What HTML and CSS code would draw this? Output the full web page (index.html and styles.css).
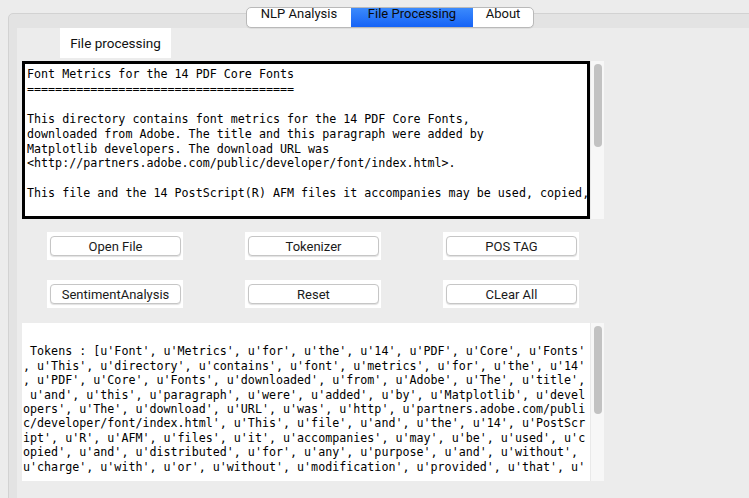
FILE: index.html
```html
<!DOCTYPE html>
<html>
<head>
<meta charset="utf-8">
<link rel="stylesheet" href="styles.css">
</head>
<body>
<div class="window">
  <div class="tabstrip">
    <div class="segments">
      <div class="seg seg-nlp">NLP Analysis</div>
      <div class="seg seg-active">File Processing</div>
      <div class="seg seg-about">About</div>
    </div>
  </div>
  <div class="pane">
    <div class="inner">
      <div class="label">File processing</div>
      <div class="text-row">
        <div class="text-box"><pre class="mono mono-top">Font Metrics for the 14 PDF Core Fonts
======================================

This directory contains font metrics for the 14 PDF Core Fonts,
downloaded from Adobe. The title and this paragraph were added by
Matplotlib developers. The download URL was
&lt;http://partners.adobe.com/public/developer/font/index.html&gt;.

This file and the 14 PostScript(R) AFM files it accompanies may be used, copied,</pre></div>
        <div class="scrollbar"><div class="thumb thumb-top"></div></div>
      </div>
      <div class="buttons">
        <div class="cell"><div class="btn">Open File</div></div>
        <div class="cell"><div class="btn">Tokenizer</div></div>
        <div class="cell"><div class="btn">POS TAG</div></div>
        <div class="cell"><div class="btn">SentimentAnalysis</div></div>
        <div class="cell"><div class="btn">Reset</div></div>
        <div class="cell"><div class="btn">CLear All</div></div>
      </div>
      <div class="out-row">
        <div class="out-box"><pre class="mono mono-out">

 Tokens : [u'Font', u'Metrics', u'for', u'the', u'14', u'PDF', u'Core', u'Fonts'
, u'This', u'directory', u'contains', u'font', u'metrics', u'for', u'the', u'14'
, u'PDF', u'Core', u'Fonts', u'downloaded', u'from', u'Adobe', u'The', u'title',
 u'and', u'this', u'paragraph', u'were', u'added', u'by', u'Matplotlib', u'devel
opers', u'The', u'download', u'URL', u'was', u'http', u'partners.adobe.com/publi
c/developer/font/index.html', u'This', u'file', u'and', u'the', u'14', u'PostScr
ipt', u'R', u'AFM', u'files', u'it', u'accompanies', u'may', u'be', u'used', u'c
opied', u'and', u'distributed', u'for', u'any', u'purpose', u'and', u'without', 
u'charge', u'with', u'or', u'without', u'modification', u'provided', u'that', u'</pre></div>
        <div class="scrollbar"><div class="thumb thumb-out"></div></div>
      </div>
    </div>
  </div>
</div>
</body>
</html>
```
FILE: styles.css
```css
html, body {
  margin: 0;
  padding: 0;
  background: #ececec;
  overflow: hidden;
  width: 749px;
  height: 498px;
}
.window {
  width: 749px;
  height: 498px;
  overflow: hidden;
  font-family: Roboto, "Liberation Sans", sans-serif;
  font-size: 13px;
  color: #111;
}
.tabstrip {
  width: 764px;
  margin-left: 8px;
  padding-top: 7px;
  height: 21px;
  display: flex;
  justify-content: center;
  position: relative;
  z-index: 2;
  margin-bottom: -15px;
}
.segments {
  display: flex;
  height: 19px;
  border: 1px solid #b9b9b9;
  border-radius: 5px;
  background: #fff;
  overflow: hidden;
  box-shadow: 0 1px 0 rgba(0,0,0,0.06);
}
.seg {
  text-align: center;
  line-height: 12px;
  padding-top: 0;
  color: #111;
}
.seg-nlp { width: 104px; }
.seg-active {
  width: 122px;
  background: linear-gradient(#3b8afc, #1663f6);
  color: #0a0a0a;
}
.seg-about { width: 60px; }
.pane {
  min-height: 500px;
  margin-left: 8px;
  border: 1px solid #d2d2d2;
  border-radius: 5px;
  background: #e3e3e3;
  padding: 14px 0 0 8px;
  box-sizing: border-box;
  width: 764px;
}
.inner {
  background: #ececec;
  min-height: 480px;
}
.label {
  margin-left: 43px;
  width: 111px;
  height: 30px;
  background: #fff;
  display: flex;
  align-items: center;
  justify-content: center;
  color: #111;
  font-size: 13.5px;
}
.text-row {
  display: flex;
  margin: 3px 0 0 5px;
  height: 158px;
}
.text-box {
  width: 568px;
  box-sizing: border-box;
  border: 3px solid #000;
  background: #fff;
  padding: 3px 2px 0;
  overflow: hidden;
}
.mono {
  margin: 0;
  font-family: "DejaVu Sans Mono", "Liberation Mono", monospace;
  font-size: 11.68px;
  color: #000;
  white-space: pre;
}
.mono-top { line-height: 14.9px; }
.mono-out { line-height: 14.4px; }
.scrollbar {
  width: 14px;
  box-sizing: border-box;
  background: #f7f7f7;
  border-left: 1px solid #e9e9e9;
  padding: 3px 0 0 3px;
}
.thumb {
  width: 8px;
  border-radius: 4px;
  background: #c2c2c2;
}
.thumb-top { height: 83px; }
.thumb-out { height: 88px; }
.buttons {
  display: grid;
  grid-template-columns: repeat(3, 136px);
  column-gap: 62px;
  row-gap: 20px;
  margin: 13px 0 0 30px;
}
.cell {
  height: 28px;
  box-sizing: border-box;
  background: #fff;
  padding: 4px 2px 4px 3px;
}
.btn {
  height: 20px;
  box-sizing: border-box;
  border: 1px solid #c6c6c6;
  border-radius: 4px;
  background: #fff;
  box-shadow: 0 1px 1px rgba(0,0,0,0.12);
  display: flex;
  align-items: center;
  justify-content: center;
  color: #1a1a1a;
  font-size: 13px;
}
.out-row {
  display: flex;
  margin: 15px 0 0 5px;
  height: 158px;
}
.out-box {
  width: 568px;
  box-sizing: border-box;
  background: #fff;
  padding: 7px 0 0 1px;
  overflow: hidden;
}
```
